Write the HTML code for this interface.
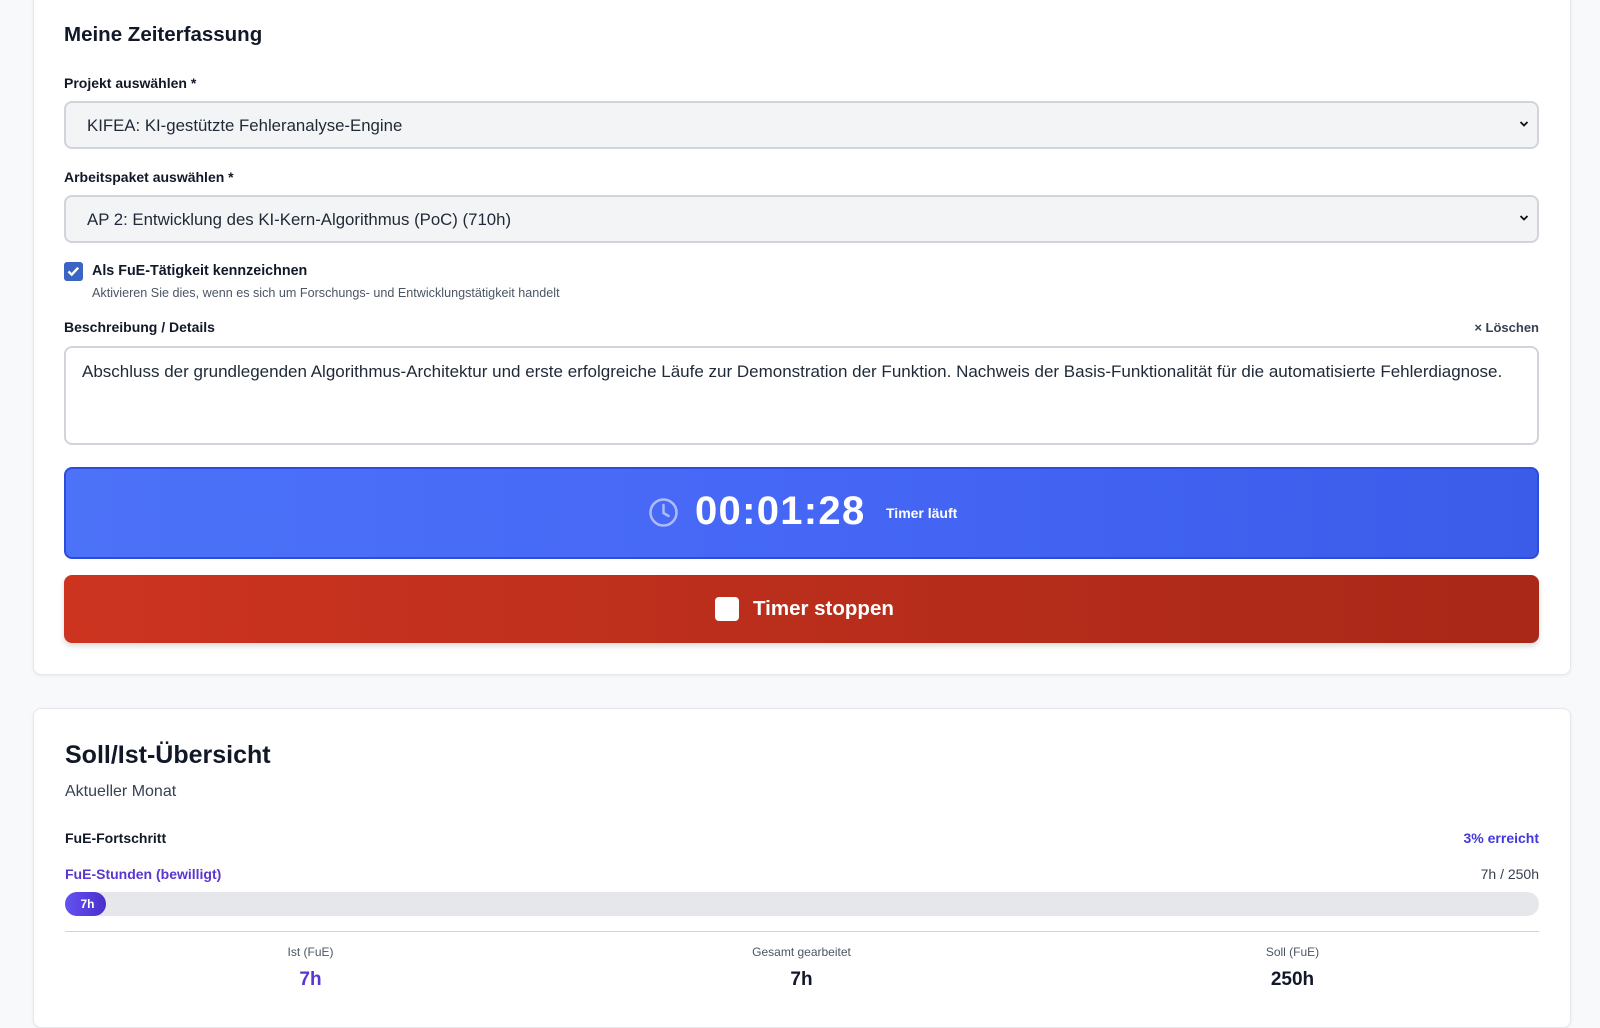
<!DOCTYPE html>
<html><head><meta charset="utf-8"><style>
*{box-sizing:border-box;margin:0;padding:0}
body{width:1600px;height:1000px;background:#f8f9fb;font-family:"Liberation Sans",sans-serif;color:#111827;position:relative;overflow:hidden}
.a{position:absolute;white-space:nowrap}
.card{position:absolute;left:33px;width:1538px;background:#fff;border:1px solid #e5e7eb;border-radius:8px;box-shadow:0 1px 3px rgba(0,0,0,.06)}
.lbl{font-size:14px;font-weight:bold;color:#111827}
.sel{position:absolute;left:64px;width:1475px;height:48px;background:#f3f4f6;border:2px solid #d1d5db;border-radius:8px;font-size:16.8px;color:#1f2937;padding:0 0 0 21px;line-height:46px}
.sel svg{position:absolute;right:8px;top:17px}
</style></head><body>
<div class="card" style="top:-10px;height:685px"></div>
<div class="a" style="left:64px;top:23px;font-size:20.5px;font-weight:bold;color:#111827">Meine Zeiterfassung</div>
<div class="a lbl" style="left:64px;top:75px">Projekt auswählen *</div>
<div class="sel" style="top:101px">KIFEA: KI-gestützte Fehleranalyse-Engine<svg width="10" height="8" viewBox="0 0 10 8"><path d="M1.5 2l3.5 3.5L8.5 2" stroke="#111" stroke-width="1.8" fill="none"/></svg></div>
<div class="a lbl" style="left:64px;top:169px">Arbeitspaket auswählen *</div>
<div class="sel" style="top:195px">AP 2: Entwicklung des KI-Kern-Algorithmus (PoC) (710h)<svg width="10" height="8" viewBox="0 0 10 8"><path d="M1.5 2l3.5 3.5L8.5 2" stroke="#111" stroke-width="1.8" fill="none"/></svg></div>
<div class="a" style="left:64px;top:262px;width:19px;height:19px;background:#3b64c4;border-radius:3px"><svg width="19" height="19" viewBox="0 0 19 19"><path d="M4.5 9.5l3.2 3.2 6.5-7" stroke="#fff" stroke-width="2.4" fill="none"/></svg></div>
<div class="a lbl" style="left:92px;top:263px;font-size:14.3px">Als FuE-Tätigkeit kennzeichnen</div>
<div class="a" style="left:92px;top:286px;font-size:12.6px;color:#4b5563">Aktivieren Sie dies, wenn es sich um Forschungs- und Entwicklungstätigkeit handelt</div>
<div class="a lbl" style="left:64px;top:319px">Beschreibung / Details</div>
<div class="a" style="right:61px;top:320px;font-size:13px;font-weight:bold;color:#374151">× Löschen</div>
<div class="a" style="left:64px;top:346px;width:1475px;height:99px;border:2px solid #d1d5db;border-radius:8px;background:#fff;font-size:17px;color:#1f2937;padding:14px 16px">Abschluss der grundlegenden Algorithmus-Architektur und erste erfolgreiche Läufe zur Demonstration der Funktion. Nachweis der Basis-Funktionalität für die automatisierte Fehlerdiagnose.</div>
<div class="a" style="left:64px;top:467px;width:1475px;height:92px;border:2px solid #2f4bdc;border-radius:8px;background:linear-gradient(90deg,#4c72f8,#4667f6 50%,#3b5ce9)"></div>
<svg class="a" style="left:648px;top:497px" width="31" height="31" viewBox="0 0 31 31"><circle cx="15.5" cy="15.5" r="13" stroke="rgba(255,255,255,.55)" stroke-width="2.5" fill="none"/><path d="M15.5 8v8l5 3" stroke="rgba(255,255,255,.55)" stroke-width="2.5" fill="none" stroke-linecap="round"/></svg>
<div class="a" style="left:695px;top:489px;font-size:40px;font-weight:bold;color:#fff;letter-spacing:1.3px">00:01:28</div>
<div class="a" style="left:886px;top:505px;font-size:14px;font-weight:bold;color:#fff">Timer läuft</div>
<div class="a" style="left:64px;top:575px;width:1475px;height:68px;border-radius:8px;background:linear-gradient(90deg,#cc3420,#b82d1b 55%,#a92818);box-shadow:0 3px 6px rgba(0,0,0,.15)"></div>
<div class="a" style="left:715px;top:597px;width:24px;height:24px;background:#fff;border-radius:4px"></div>
<div class="a" style="left:753px;top:597px;font-size:20.5px;font-weight:bold;color:#fff">Timer stoppen</div>

<div class="card" style="top:708px;height:320px"></div>
<div class="a" style="left:65px;top:741px;font-size:25px;font-weight:bold;color:#111827">Soll/Ist-Übersicht</div>
<div class="a" style="left:65px;top:783px;font-size:16px;color:#374151">Aktueller Monat</div>
<div class="a lbl" style="left:65px;top:830px">FuE-Fortschritt</div>
<div class="a" style="right:61px;top:830px;font-size:14px;font-weight:bold;color:#4338dd">3% erreicht</div>
<div class="a" style="left:65px;top:866px;font-size:14px;font-weight:bold;color:#5b35d0">FuE-Stunden (bewilligt)</div>
<div class="a" style="right:61px;top:866px;font-size:14px;color:#374151">7h / 250h</div>
<div class="a" style="left:65px;top:892px;width:1474px;height:24px;background:#e5e7eb;border-radius:12px"></div>
<div class="a" style="left:65px;top:892px;width:41px;height:24px;background:linear-gradient(90deg,#6352f2,#4a2fcb);border-radius:12px;color:#fff;font-size:12px;font-weight:bold;text-align:center;line-height:24px;padding-left:4px">7h</div>
<div class="a" style="left:65px;top:931px;width:1474px;height:1px;background:#d1d5db"></div>
<div class="a" style="left:65px;top:945px;width:491px;text-align:center;font-size:12px;color:#4b5563">Ist (FuE)</div>
<div class="a" style="left:556px;top:945px;width:491px;text-align:center;font-size:12px;color:#4b5563">Gesamt gearbeitet</div>
<div class="a" style="left:1047px;top:945px;width:491px;text-align:center;font-size:12px;color:#4b5563">Soll (FuE)</div>
<div class="a" style="left:65px;top:969px;width:491px;text-align:center;font-size:19px;font-weight:bold;color:#5b35d0">7h</div>
<div class="a" style="left:556px;top:969px;width:491px;text-align:center;font-size:19px;font-weight:bold;color:#111827">7h</div>
<div class="a" style="left:1047px;top:969px;width:491px;text-align:center;font-size:19px;font-weight:bold;color:#111827">250h</div>
</body></html>
